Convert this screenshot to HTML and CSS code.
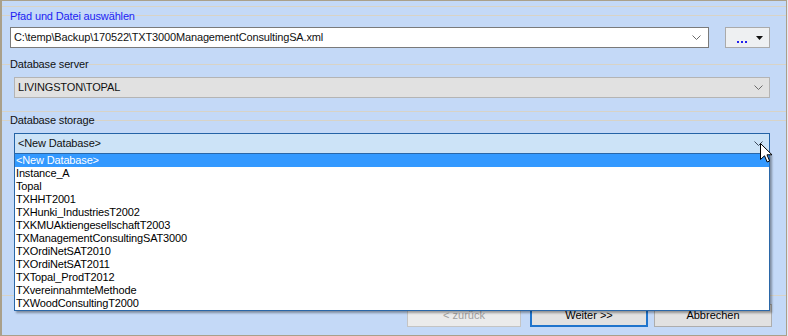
FILE: index.html
```html
<!DOCTYPE html>
<html lang="de">

<head>
    <meta charset="UTF-8">
    <title>Import - Datenbank wählen</title>
    <link rel="stylesheet" href="styles.css">
</head>

<body>
    <div class="window">
        <div class="rule-top"></div>

        <section class="panel panel-path">
            <label class="caption caption-blue">Pfad und Datei auswählen</label>
            <div class="path-row">
                <div class="combo combo-path">
                    <span class="combo-text">C:\temp\Backup\170522\TXT3000ManagementConsultingSA.xml</span>
                    <svg class="chevron" width="9" height="5" viewBox="0 0 9 5"><path d="M0.5 0.5 L4.5 4.5 L8.5 0.5" fill="none" stroke="#6a6a6a" stroke-width="1"/></svg>
                </div>
                <button class="browse">
                    <svg class="dots" width="10" height="2" viewBox="0 0 10 2"><rect x="0" y="0" width="2" height="2" fill="#2222ee"/><rect x="4" y="0" width="2" height="2" fill="#2222ee"/><rect x="8" y="0" width="2" height="2" fill="#2222ee"/></svg>
                    <svg class="tri" width="7" height="4" viewBox="0 0 7 4"><path d="M0 0 H7 L3.5 4 Z" fill="#111"/></svg>
                </button>
            </div>
        </section>

        <section class="panel panel-server">
            <label class="caption">Database server</label>
            <div class="combo combo-wide combo-disabled">
                <span class="combo-text">LIVINGSTON\TOPAL</span>
                <svg class="chevron" width="9" height="5" viewBox="0 0 9 5"><path d="M0.5 0.5 L4.5 4.5 L8.5 0.5" fill="none" stroke="#6a6a6a" stroke-width="1"/></svg>
            </div>
        </section>

        <section class="panel panel-storage">
            <label class="caption">Database storage</label>
            <div class="combo combo-wide combo-focus">
                <span class="combo-text">&lt;New Database&gt;</span>
                <svg class="chevron" width="9" height="5" viewBox="0 0 9 5"><path d="M0.5 0.5 L4.5 4.5 L8.5 0.5" fill="none" stroke="#3d4a5a" stroke-width="1"/></svg>

                <ul class="droplist">
                    <li class="selected">&lt;New Database&gt;</li>
                    <li>Instance_A</li>
                    <li>Topal</li>
                    <li>TXHHT2001</li>
                    <li>TXHunki_IndustriesT2002</li>
                    <li>TXKMUAktiengesellschaftT2003</li>
                    <li>TXManagementConsultingSAT3000</li>
                    <li>TXOrdiNetSAT2010</li>
                    <li>TXOrdiNetSAT2011</li>
                    <li>TXTopal_ProdT2012</li>
                    <li>TXvereinnahmteMethode</li>
                    <li>TXWoodConsultingT2000</li>
                </ul>

                <svg class="cursor" width="13" height="20" viewBox="0 0 13 20">
                    <path d="M0.5 0.5 L0.5 16.5 L4.5 12.8 L7.2 19 L9.6 18 L7 11.8 L12 11.8 Z" fill="#fff" stroke="#000" stroke-width="1" stroke-linejoin="miter"/>
                </svg>
            </div>
        </section>

        <div class="buttons">
            <button class="btn btn-disabled">&lt; zurück</button>
            <button class="btn btn-default">Weiter &gt;&gt;</button>
            <button class="btn btn-cancel">Abbrechen</button>
        </div>
    </div>
</body>

</html>
```

FILE: styles.css
```css
/* General Reset */
* {
    margin: 0;
    padding: 0;
    box-sizing: border-box;
}

body {
    font-family: 'Liberation Sans', Arial, sans-serif;
    font-size: 11px;
    line-height: 13px;
    letter-spacing: -0.15px;
    color: #111;
    background-color: #e4ebf5;
}

.window {
    position: relative;
    width: 787px;
    height: 336px;
    background-color: #c4d9f7;
    border: 1px solid #aaa08a;
    border-left-width: 2px;
}

/* faint separator lines of the form */
.rule-top {
    height: 6px;
    border-bottom: 1px solid #d8d3c6;
}

.panel {
    padding-left: 8px;
}

.caption {
    display: block;
    width: fit-content;
    height: 13px;
    background-color: #c4d9f7;
    white-space: nowrap;
}

.caption-blue {
    color: #1d1df2;
}

.panel-path {
    margin-top: 8px;
    border-top: 1px solid #d8d3c6;
    border-bottom: 1px solid #d8d3c6;
    padding-bottom: 16px;
}

.panel-path .caption {
    margin-top: -6px;
}

.path-row {
    display: flex;
    margin-top: 4px;
}

.panel-server {
    border-bottom: 1px solid #d8d3c6;
    padding-bottom: 13px;
}

.panel-server .caption {
    margin-top: -7px;
}

.panel-storage {
    margin-top: 8px;
    border-top: 1px solid #d8d3c6;
    border-bottom: 1px solid #d8d3c6;
    padding-bottom: 141px;
}

.panel-storage .caption {
    margin-top: -7px;
}

.panel-server .combo,
.panel-storage .combo {
    margin-top: 6px;
}

/* combo boxes */
.combo {
    position: relative;
    display: flex;
    align-items: center;
    justify-content: space-between;
    height: 21px;
    padding: 0 7px 0 3px;
    border: 1px solid #7a7a7a;
    background-color: #fff;
    white-space: nowrap;
}

.combo-path {
    width: 699px;
}

.combo-wide {
    width: 756px;
    margin-left: 4px;
    padding-right: 6px;
}

.combo-disabled {
    background-color: #e1e1e1;
    border-color: #b4b4b4;
}

.combo-focus {
    background-color: #cce3f7;
    border-color: #2463a6;
}

.chevron {
    display: block;
    flex-shrink: 0;
}

.browse {
    display: flex;
    align-items: center;
    justify-content: flex-end;
    gap: 9px;
    width: 45px;
    height: 21px;
    margin-left: 16px;
    padding-right: 6px;
    border: 1px solid #aaaaaa;
    background-color: #eef0f2;
    font: inherit;
}

.browse .dots {
    display: block;
    margin-top: 8px;
}

.browse .tri {
    display: block;
}

/* open dropdown of the storage combo */
.droplist {
    position: absolute;
    top: 19px;
    left: -1px;
    width: 756px;
    list-style: none;
    background-color: #fff;
    border: 1px solid #2a67a8;
    box-shadow: 2px 2px 2px rgba(0, 0, 0, 0.35);
    z-index: 10;
}

.droplist li {
    height: 13px;
    padding-left: 1px;
    line-height: 13px;
    color: #000;
    white-space: nowrap;
}

.droplist li.selected {
    background-color: #3399ff;
    color: #fff;
}

.cursor {
    position: absolute;
    top: 9px;
    right: -4px;
    z-index: 20;
}

/* wizard buttons */
.buttons {
    display: flex;
    margin-top: 8px;
    padding-left: 405px;
}

.btn {
    height: 23px;
    font: inherit;
    background-color: #e1e1e1;
    border: 1px solid #adadad;
    color: #000;
}

.btn-disabled {
    width: 114px;
    color: #a0a0a0;
    background-color: #ebebeb;
    border-color: #c4c4c4;
}

.btn-default {
    width: 118px;
    margin-left: 9px;
    border: 2px solid #1f74cc;
}

.btn-cancel {
    width: 118px;
    margin-left: 6px;
}
```
